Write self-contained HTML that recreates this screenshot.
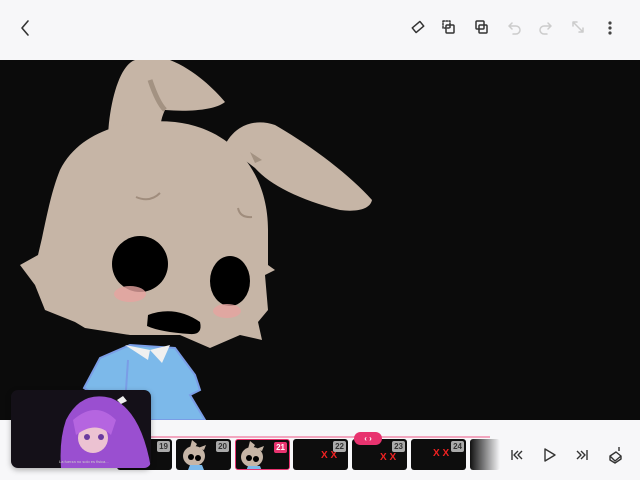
<!DOCTYPE html>
<html><head><style>
body{margin:0;width:640px;height:480px;overflow:hidden;background:#f7f7f9;font-family:"Liberation Sans",sans-serif;position:relative}
.top{position:absolute;left:0;top:0;width:640px;height:60px;background:#f7f7f9}
.cv{position:absolute;left:0;top:60px;width:640px;height:360px;background:#0b0b0b;overflow:hidden}
.bar{position:absolute;left:0;top:420px;width:640px;height:60px;background:#f7f7f9}
.fr{position:absolute;top:439px;width:55px;height:31px;background:#0d0d0d;border-radius:3px;overflow:hidden}
.n{position:absolute;right:2px;top:2px;background:#aaa;color:#333;font-size:8px;font-weight:bold;padding:1px 2px;border-radius:2px}
</style></head><body>
<div class="top">
<svg width="640" height="60" style="position:absolute;left:0;top:0" fill="none" stroke-linecap="round" stroke-linejoin="round">
<path d="M28 21l-6 7 6 7" stroke="#333" stroke-width="1.6"/>
<g stroke="#333" stroke-width="1.5">
<rect x="413" y="24" width="10" height="6" transform="rotate(-40 418 27)"/>
<rect x="443" y="21" width="7" height="7" stroke-dasharray="1.5 1.5"/><rect x="446" y="25" width="8" height="8" rx="1"/>
<rect x="476" y="21" width="8" height="8" rx="1"/><rect x="479" y="25" width="8" height="8" rx="1"/>
</g>
<g stroke="#ccc" stroke-width="1.5">
<path d="M509 26h7a4 4 0 010 8h-3M509 26l3-3M509 26l3 3"/>
<path d="M551 26h-7a4 4 0 000 8h3M551 26l-3-3M551 26l-3 3"/>
<path d="M573 22l10 10M573 22h4M573 22v4M583 32h-4M583 32v-4"/>
</g>
<g fill="#444"><circle cx="610" cy="23" r="1.6"/><circle cx="610" cy="28" r="1.6"/><circle cx="610" cy="33" r="1.6"/></g>
</svg>
</div>
<div class="cv">
<svg width="640" height="360">
<g fill="#c6b5a6">
<path d="M108 75 C110 40 120 5 135 0 L170 0 C195 10 215 30 225 42 C215 50 190 52 165 50 C160 60 160 70 160 75Z"/>
<path d="M225 85 C235 65 255 58 275 65 C310 85 350 115 372 140 C370 150 355 152 340 150 C300 140 270 125 255 108Z"/>
<path d="M60 110 C80 70 130 58 175 62 C230 68 268 110 268 170 L268 205 L275 210 L265 215 L268 250 L258 262 L262 280 L240 275 L210 288 L180 275 L130 275 L85 268 L75 262 L45 250 L35 225 L20 205 L38 195 L42 178 C48 150 52 130 60 110Z"/>
</g>
<path d="M150 20 C155 35 160 45 165 50" stroke="#a39282" stroke-width="5" fill="none"/>
<path d="M250 92 L262 100 L255 103Z" fill="#a39282"/>
<path d="M136 137 Q150 143 160 133M238 148 Q240 158 252 157" stroke="#a08d7d" stroke-width="2" fill="none"/>
<ellipse cx="140" cy="204" rx="28" ry="28" fill="#000"/>
<ellipse cx="230" cy="221" rx="20" ry="25" fill="#000"/>
<ellipse cx="130" cy="234" rx="16" ry="8" fill="#e6a4a0" opacity=".8"/>
<ellipse cx="227" cy="251" rx="14" ry="7" fill="#e6a4a0" opacity=".8"/>
<path d="M148 255 Q175 245 200 262 Q203 275 190 274 Q160 272 147 266Z" fill="#000"/>
<path d="M84 328 L100 298 L130 285 L175 288 L195 315 L200 330 L190 335 L205 360 L95 360 L92 333Z" fill="#7cb9ea" stroke="#7a9de6" stroke-width="2"/>
<path d="M125 285 L150 290 L148 300Z M150 290 L170 285 L162 303Z" fill="#f0f0f0"/>
<path d="M128 300 L125 345" stroke="#7a9de6" stroke-width="2"/>
</svg>
</div>
<div class="bar"></div>
<div style="position:absolute;left:100px;top:436px;width:390px;height:2px;background:#f2a6bf"></div>
<div class="fr" style="left:117px"><span class="n">19</span></div>
<div class="fr" style="left:176px"><svg width="55" height="31"><ellipse cx="18" cy="17" rx="11" ry="10" fill="#c6b5a6"/><path d="M14 9l2-8 5 4-3 5zM22 9l8-3-2 5z" fill="#c6b5a6"/><circle cx="15" cy="18" r="3"/><circle cx="22" cy="19" r="3"/><path d="M12 31l2-5h12l2 5z" fill="#7cb9ea"/></svg><span class="n">20</span></div>
<div class="fr" style="left:235px;border:1.5px solid #e8336f;width:53px;height:29px"><svg width="55" height="31"><ellipse cx="16" cy="17" rx="11" ry="10" fill="#c6b5a6"/><path d="M12 9l2-8 5 4-3 5zM20 9l8-3-2 5z" fill="#c6b5a6"/><circle cx="13" cy="18" r="3"/><circle cx="20" cy="19" r="3"/><path d="M10 31l2-5h12l2 5z" fill="#7cb9ea"/></svg><span class="n" style="background:#e8336f;color:#fff">21</span></div>
<div class="fr" style="left:293px"><svg width="55" height="31"><text x="28" y="19" fill="#e22" font-size="10" font-weight="bold">X X</text></svg><span class="n">22</span></div>
<div class="fr" style="left:352px"><svg width="55" height="31"><text x="28" y="21" fill="#e22" font-size="10" font-weight="bold">X X</text></svg><span class="n">23</span></div>
<div class="fr" style="left:411px"><svg width="55" height="31"><text x="22" y="17" fill="#e22" font-size="10" font-weight="bold">X X</text></svg><span class="n">24</span></div>
<div class="fr" style="left:470px;width:30px;background:linear-gradient(90deg,#111,#f7f7f9)"></div>
<div style="position:absolute;left:354px;top:432px;width:28px;height:13px;border-radius:7px;background:#e8336f;color:#fff;font-size:8px;line-height:13px;text-align:center;font-weight:bold">‹ ›</div>
<div style="position:absolute;left:11px;top:390px;width:140px;height:78px;border-radius:7px;background:#141018;overflow:hidden;box-shadow:0 2px 6px rgba(0,0,0,.3)">
<svg width="140" height="78"><path d="M55 30 Q70 0 100 8 Q130 20 140 78 H50 Q48 50 55 30Z" fill="#9a4fd0"/><ellipse cx="82" cy="48" rx="15" ry="15" fill="#ecc2d2"/><path d="M62 30 Q85 10 105 30 L100 45 Q85 30 65 45Z" fill="#b565e0"/><circle cx="76" cy="47" r="3" fill="#6a3aa0"/><circle cx="90" cy="47" r="3" fill="#6a3aa0"/><path d="M106 10l6-4 4 5-6 3z" fill="#eee"/><text x="48" y="73" fill="#ccc" font-size="4">La fuerza no solo es fisica...</text></svg>
</div>
<svg width="640" height="60" style="position:absolute;left:0;top:420px" fill="none" stroke="#333" stroke-width="1.4" stroke-linejoin="round">
<path d="M512 30v10M522 31l-4 4 4 4M518 31l-4 4 4 4" />
<path d="M545 29l10 6-10 6z"/>
<path d="M587 30v10M577 31l4 4-4 4M581 31l4 4-4 4"/>
<path d="M610 36l6-4 5 4-6 5zM610 36v4l5 3 6-4v-3M619 27v4" />
</svg>
</body></html>
